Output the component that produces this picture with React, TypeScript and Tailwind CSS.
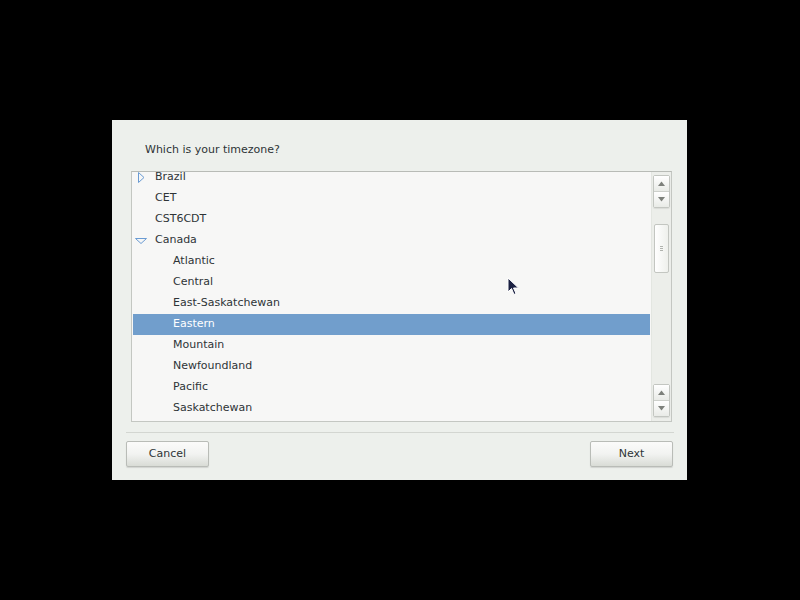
import { ReactNode } from 'react'

type Row = { label: string; depth: 0 | 1; arrow?: 'right' | 'down'; selected?: boolean }

const rows: Row[] = [
  { label: 'Brazil', depth: 0, arrow: 'right' },
  { label: 'CET', depth: 0 },
  { label: 'CST6CDT', depth: 0 },
  { label: 'Canada', depth: 0, arrow: 'down' },
  { label: 'Atlantic', depth: 1 },
  { label: 'Central', depth: 1 },
  { label: 'East-Saskatchewan', depth: 1 },
  { label: 'Eastern', depth: 1, selected: true },
  { label: 'Mountain', depth: 1 },
  { label: 'Newfoundland', depth: 1 },
  { label: 'Pacific', depth: 1 },
  { label: 'Saskatchewan', depth: 1 },
]

function Expander({ dir }: { dir: 'right' | 'down' }) {
  return (
    <svg width="12" height="12" viewBox="0 0 12 12" className="shrink-0">
      {dir === 'right' ? (
        <path d="M3.5 0.5 L9 5.5 L3.5 10.5 Z" fill="none" stroke="#6a9bd3" strokeWidth="1" />
      ) : (
        <path d="M0.5 3.5 L11.5 3.5 L6 8.5 Z" fill="none" stroke="#6a9bd3" strokeWidth="1" />
      )}
    </svg>
  )
}

function StepButton({ up }: { up: boolean }) {
  return (
    <div className="flex h-[15px] w-[15px] items-center justify-center bg-gradient-to-b from-white to-[#e9ebe7]">
      <svg width="7" height="5" viewBox="0 0 7 5">
        {up ? <path d="M0 5 L3.5 0.5 L7 5 Z" fill="#7d807b" /> : <path d="M0 0 L3.5 4.5 L7 0 Z" fill="#7d807b" />}
      </svg>
    </div>
  )
}

function Steppers() {
  return (
    <div className="flex flex-col rounded-[2px] border border-[#c3c6c1] shadow-[0_1px_1px_rgba(0,0,0,0.08)]">
      <StepButton up />
      <div className="h-px bg-[#cdd0cb]" />
      <StepButton up={false} />
    </div>
  )
}

function PushButton({ children }: { children: ReactNode }) {
  return (
    <div className="flex h-[26px] w-[83px] items-center justify-center rounded-[2px] border border-[#b9bcb7] bg-gradient-to-b from-[#fbfbfa] via-[#f2f3f1] to-[#d9dcd6] text-[11px] text-[#2e3436] shadow-[0_1px_1px_rgba(0,0,0,0.12)]">
      {children}
    </div>
  )
}

export default function App() {
  return (
    <div
      className="relative h-[600px] w-[800px] bg-black pl-[112px] pt-[120px]"
      style={{ fontFamily: '"DejaVu Sans", sans-serif' }}
    >
      <div className="flex h-[360px] w-[575px] flex-col bg-[#edf0ec]">
        <div className="pl-[33px] pt-[22px] text-[11px] leading-[16px] text-[#2e3436]">Which is your timezone?</div>

        <div className="ml-[19px] mt-[13px] flex h-[251px] w-[541px] border border-[#c4c7c2] border-t-[#b8bbb6] bg-[#f7f7f6]">
          <div className="flex-1 overflow-hidden p-px">
            <div className="-mt-[6px] flex flex-col">
              {rows.map((r) => (
                <div
                  key={r.label}
                  className={`flex h-[21px] items-center text-[11px] ${
                    r.selected ? 'bg-[#719ecc] text-white' : 'text-[#2e3436]'
                  }`}
                >
                  <div className="flex w-[22px] justify-start pl-[2px]">{r.arrow && <Expander dir={r.arrow} />}</div>
                  {r.depth === 1 && <div className="w-[18px]" />}
                  <span>{r.label}</span>
                </div>
              ))}
            </div>
          </div>
          <div className="flex w-[20px] flex-col items-center border-l border-[#e3e6e1] bg-[#eceeea] pt-[3px] pb-[4px]">
            <Steppers />
            <div className="mt-[16px] flex h-[49px] w-[15px] items-center justify-center rounded-[2px] border border-[#c3c6c1] bg-gradient-to-r from-white to-[#eef0ec]">
              <div className="flex flex-col gap-px">
                <div className="h-px w-[3px] bg-[#b0b3ae]" />
                <div className="h-px w-[3px] bg-[#b0b3ae]" />
                <div className="h-px w-[3px] bg-[#b0b3ae]" />
              </div>
            </div>
            <div className="flex-1" />
            <Steppers />
          </div>
        </div>

        <div className="ml-[14px] mt-[10px] h-px w-[548px] bg-[#d3d6d1]" />

        <div className="mt-[8px] flex justify-between pl-[14px] pr-[14px]">
          <PushButton>Cancel</PushButton>
          <PushButton>Next</PushButton>
        </div>
      </div>

      <svg className="absolute left-[507px] top-[277px]" width="13" height="19" viewBox="0 0 13 19">
        <path d="M1 1 L1 15 L4.5 11.5 L7 17.5 L9 16.5 L6.5 11 L11.5 11 Z" fill="#1b2142" stroke="#ffffff" strokeWidth="1" />
      </svg>
    </div>
  )
}
